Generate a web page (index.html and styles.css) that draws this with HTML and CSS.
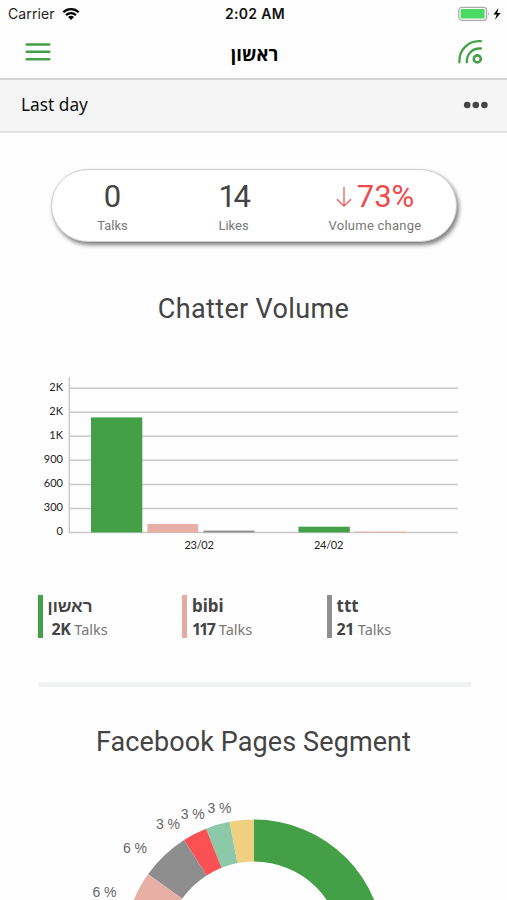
FILE: index.html
```html
<!DOCTYPE html>
<html lang="en">
  <head>
    <meta charset="UTF-8" />
    <meta name="viewport" content="width=device-width, initial-scale=1.0" />
    <title>ראשון</title>
    <link rel="stylesheet" href="styles.css">
  </head>
  <body>
    <div class="status">
      <div class="carrier">
        <span>Carrier</span>
        <svg width="18" height="14" viewBox="0 0 18 14">
          <path d="M1.3 5.2a11 11 0 0 1 15.4 0M4.1 8.1a7 7 0 0 1 9.8 0" fill="none" stroke="#000" stroke-width="2.3" />
          <path d="M9 13L6 10.1a4.3 4.3 0 0 1 6 0z" />
        </svg>
      </div>
      <span class="time">2:02 AM</span>
      <svg class="battery" width="44" height="16" viewBox="0 0 44 16">
        <rect x="0.8" y="1.3" width="27.8" height="13" rx="3" fill="#fff" stroke="#aaa" stroke-width="1.2" />
        <rect x="2.6" y="3" width="24" height="9.6" rx="1" fill="#4cd964" />
        <path d="M30 5.7q1.8 2.1 0 4.2z" fill="#aaa" />
        <path d="M40.5 2L35.5 8.6h3.2L37 13.7l5.6-6.8h-3.4z" />
      </svg>
    </div>

    <div class="header">
      <svg width="26" height="20" viewBox="0 0 26 20">
        <path d="M1.7 2.4h22.6M1.7 9.8h22.6M1.7 17.2h22.6" stroke="#43a047" stroke-width="2.5" stroke-linecap="round" />
      </svg>
      <h1>ראשון</h1>
      <svg width="26" height="26" viewBox="0 0 26 26" fill="none" stroke="#43a047" stroke-width="2.3" stroke-linecap="round">
        <path d="M1.4 23.3v-1.6A19.5 19.5 0 0 1 20.9 2.2h2M8.9 23.3v-1A12.5 12.5 0 0 1 21.4 9.5h1.5" />
        <circle cx="19.3" cy="19.9" r="3.5" stroke-width="2.6" />
      </svg>
    </div>

    <div class="filter">
      <span>Last day</span>
      <svg width="26" height="8" viewBox="0 0 26 8" fill="#444">
        <circle cx="4.2" cy="4" r="3.3" />
        <circle cx="12.8" cy="4" r="3.3" />
        <circle cx="21.4" cy="4" r="3.3" />
      </svg>
    </div>

    <div class="summary">
      <div class="item">
        <div class="num">0</div>
        <div class="label">Talks</div>
      </div>
      <div class="item">
        <div class="num tight">14</div>
        <div class="label">Likes</div>
      </div>
      <div class="item change">
        <div class="num red">
          <svg width="16" height="22" viewBox="0 0 16 22">
            <path d="M8 1v19M1 13.2l7 7 7-7" fill="none" stroke="#f0595a" stroke-width="1.3" />
          </svg>
          <span>73%</span>
        </div>
        <div class="label">Volume change</div>
      </div>
    </div>

    <h2 class="volume-title">Chatter Volume</h2>

    <svg class="chart" width="507" height="190" viewBox="0 370 507 190">
      <path d="M69 388.3h389M69 412.3h389M69 436.3h389M69 460.3h389M69 484.4h389M69 508.4h389M69 532.4h389" stroke="#c9c9c9" stroke-width="1.5" />
      <path d="M69.3 377v156" stroke="#c9c9c9" stroke-width="1.4" />
      <g class="green">
        <rect x="91" y="417.4" width="51.3" height="115" />
        <rect x="298.5" y="526.7" width="51.3" height="5.7" />
      </g>
      <rect class="pink" x="147.3" y="524" width="51" height="8.4" />
      <rect class="gray" x="203.5" y="530.6" width="51" height="1.8" />
      <rect class="pink" x="355" y="531.6" width="51" height="0.8" />
      <g class="axis" text-anchor="end">
        <text x="63" y="391">2K</text>
        <text x="63" y="415">2K</text>
        <text x="63" y="439">1K</text>
        <text x="63" y="463">900</text>
        <text x="63" y="487">600</text>
        <text x="63" y="511">300</text>
        <text x="63" y="535">0</text>
      </g>
      <g class="axis date" text-anchor="middle">
        <text x="199" y="548.5">23/02</text>
        <text x="328.5" y="548.5">24/02</text>
      </g>
    </svg>

    <div class="legend">
      <div class="page b-green">
        <div class="name">ראשון</div>
        <div class="talks"><b class="indent">2K</b> Talks</div>
      </div>
      <div class="page b-pink">
        <div class="name">bibi</div>
        <div class="talks"><b class="ones">117</b> Talks</div>
      </div>
      <div class="page b-gray">
        <div class="name">ttt</div>
        <div class="talks"><b>21</b> Talks</div>
      </div>
    </div>

    <div class="line"></div>

    <h2 class="segment-title">Facebook Pages Segment</h2>

    <svg class="donut" width="507" height="110" viewBox="0 790 507 110">
      <!-- center 254,949.5  outer 130  inner 88 -->
      <path class="green" d="M254 819.5A130 130 0 0 1 384 949.5H342A88 88 0 0 0 254 861.5z" />
      <path class="yellow" d="M229.4 821.8A130 130 0 0 1 254 819.5V861.5A88 88 0 0 0 237.4 863.1z" />
      <path class="mint" d="M206 828.7A130 130 0 0 1 229.4 821.8L237.4 863.1A88 88 0 0 0 221.5 867.7z" />
      <path class="red-fill" d="M184 840A130 130 0 0 1 206 828.7L221.5 867.7A88 88 0 0 0 206.6 875.4z" />
      <path class="gray" d="M148 874.3A130 130 0 0 1 184 840L206.6 875.4A88 88 0 0 0 182.2 898.6z" />
      <path class="pink" d="M127.9 918A130 130 0 0 1 148 874.3L182.2 898.6A88 88 0 0 0 168.6 928z" />
      <g class="percent" text-anchor="middle">
        <text x="219.5" y="813">3 %</text>
        <text x="192.7" y="818.5">3 %</text>
        <text x="168" y="829">3 %</text>
        <text x="135" y="852.5">6 %</text>
        <text x="104.5" y="896.5">6 %</text>
      </g>
    </svg>
  </body>
</html>
```

FILE: styles.css
```css
* {
  box-sizing: border-box;
}
body {
  margin: 0;
  height: 900px;
  overflow: hidden;
  background-color: #fefefe;
  color: #444;
  font-family: Roboto, "Liberation Sans", sans-serif;
}
svg {
  display: block;
}
.status {
  display: grid;
  grid-template-columns: 1fr auto 1fr;
  align-items: center;
  height: 27px;
  padding: 0 5px 0 8px;
  color: #222;
  font-family: Inter, sans-serif;
  font-size: 14px;
}
.carrier {
  display: flex;
  align-items: center;
  gap: 7px;
  letter-spacing: 0.1px;
}
.time {
  color: #111;
  font-weight: 600;
  letter-spacing: 0.35px;
}
.battery {
  justify-self: end;
}
.header {
  display: flex;
  align-items: center;
  justify-content: space-between;
  height: 53px;
  padding: 0 23px 2px 25px;
  border-bottom: 2px solid #d4d4d4;
}
h1 {
  margin: 3px 0 0;
  color: #000;
  font-family: "Open Sans", "Liberation Sans", sans-serif;
  font-size: 18.5px;
  font-weight: bold;
}
.filter {
  display: flex;
  align-items: center;
  justify-content: space-between;
  height: 53px;
  padding: 0 18px 2px 21px;
  background-color: #f5f5f5;
  border-bottom: 2px solid #e2e2e2;
  color: #111;
  font-family: "Noto Sans", sans-serif;
  font-size: 17.3px;
}
.summary {
  display: grid;
  grid-template-columns: 121px 121px 1fr;
  width: 406px;
  height: 73px;
  margin: 36px 0 0 51px;
  padding-top: 9px;
  background-color: #fff;
  border: 1px solid #ccc;
  border-radius: 37px;
  box-shadow: 2px 3px 4px rgba(0, 0, 0, 0.5);
  text-align: center;
}
.num {
  display: flex;
  align-items: center;
  justify-content: center;
  gap: 5px;
  height: 35px;
  font-size: 31px;
}
.tight {
  letter-spacing: -2.5px;
}
.red {
  color: #f0494b;
}
.label {
  color: #777;
  font-size: 13px;
  line-height: 23px;
}
.change .label {
  letter-spacing: 0.25px;
}
h2 {
  margin: 0;
  font-size: 27px;
  font-weight: normal;
  line-height: 32px;
  text-align: center;
}
.volume-title {
  margin-top: 51px;
  letter-spacing: 0.35px;
}
.chart {
  margin-top: 45px;
}
.axis {
  fill: #222;
  font-family: Lato, sans-serif;
  font-size: 11px;
}
.date {
  letter-spacing: -0.25px;
}
.green {
  fill: #43a047;
}
.pink {
  fill: #e8afa6;
}
.gray {
  fill: #8e8e8e;
}
.yellow {
  fill: #eed080;
}
.mint {
  fill: #8bc9a9;
}
.red-fill {
  fill: #fa5254;
}
.legend {
  display: grid;
  grid-template-columns: repeat(3, 144.5px);
  margin: 35px 0 0 37.5px;
}
.page {
  height: 43px;
  padding-left: 5px;
  border-left: 5px solid;
  font-family: "Noto Sans", "Liberation Sans", sans-serif;
}
.b-green {
  border-color: #43a047;
}
.b-pink {
  border-color: #e8a9a1;
}
.b-gray {
  border-color: #8e8e8e;
}
.name {
  color: #444;
  font-size: 17px;
  font-weight: bold;
  line-height: 22px;
}
.talks {
  color: #777;
  font-size: 14.5px;
  line-height: 24px;
}
.talks b {
  color: #444;
  font-size: 16px;
  letter-spacing: -0.4px;
}
.talks .ones {
  letter-spacing: -1.8px;
  margin-right: 1px;
}
.indent {
  margin-left: 4px;
}
.line {
  width: 433px;
  height: 5px;
  margin: 44px 0 0 38px;
  background-color: #f1f2f2;
}
.segment-title {
  margin-top: 39px;
  letter-spacing: 0.1px;
}
.donut {
  margin-top: 32px;
}
.percent {
  fill: #666;
  font-family: "Liberation Sans", sans-serif;
  font-size: 14px;
}
```
